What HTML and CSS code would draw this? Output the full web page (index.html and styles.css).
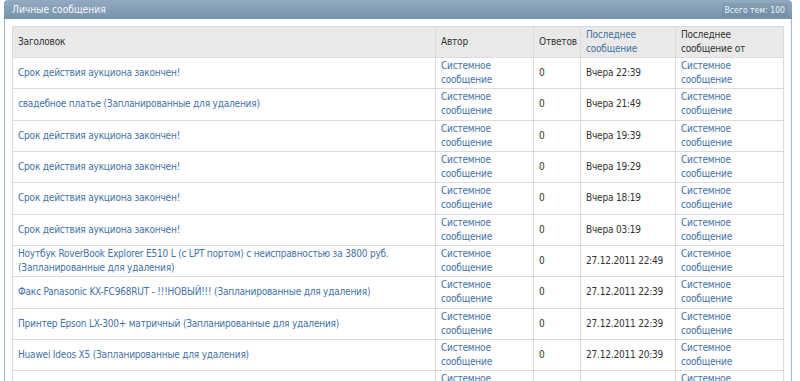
FILE: index.html
```html
<!DOCTYPE html>
<html lang="ru">
<head>
<meta charset="utf-8">
<link rel="stylesheet" href="styles.css">
</head>
<body>
<div class="panel">
  <div class="panel-head">
    <span class="panel-title">Личные сообщения</span>
    <span class="panel-count">Всего тем: 100</span>
  </div>
  <div class="panel-body">
    <table class="grid">
      <colgroup>
        <col class="c-title"><col class="c-author"><col class="c-replies"><col class="c-last"><col class="c-from">
      </colgroup>
      <thead>
        <tr>
          <th>Заголовок</th>
          <th>Автор</th>
          <th>Ответов</th>
          <th><a href="#" class="lnk">Последнее сообщение</a></th>
          <th>Последнее сообщение от</th>
        </tr>
      </thead>
      <tbody>
        <tr><td><a class="lnk" href="#">Срок действия аукциона закончен!</a></td><td><a class="lnk" href="#">Системное сообщение</a></td><td>0</td><td>Вчера 22:39</td><td><a class="lnk" href="#">Системное сообщение</a></td></tr>
        <tr><td><a class="lnk" href="#">свадебное платье (Запланированные для удаления)</a></td><td><a class="lnk" href="#">Системное сообщение</a></td><td>0</td><td>Вчера 21:49</td><td><a class="lnk" href="#">Системное сообщение</a></td></tr>
        <tr><td><a class="lnk" href="#">Срок действия аукциона закончен!</a></td><td><a class="lnk" href="#">Системное сообщение</a></td><td>0</td><td>Вчера 19:39</td><td><a class="lnk" href="#">Системное сообщение</a></td></tr>
        <tr><td><a class="lnk" href="#">Срок действия аукциона закончен!</a></td><td><a class="lnk" href="#">Системное сообщение</a></td><td>0</td><td>Вчера 19:29</td><td><a class="lnk" href="#">Системное сообщение</a></td></tr>
        <tr><td><a class="lnk" href="#">Срок действия аукциона закончен!</a></td><td><a class="lnk" href="#">Системное сообщение</a></td><td>0</td><td>Вчера 18:19</td><td><a class="lnk" href="#">Системное сообщение</a></td></tr>
        <tr><td><a class="lnk" href="#">Срок действия аукциона закончен!</a></td><td><a class="lnk" href="#">Системное сообщение</a></td><td>0</td><td>Вчера 03:19</td><td><a class="lnk" href="#">Системное сообщение</a></td></tr>
        <tr><td><a class="lnk" href="#">Ноутбук RoverBook Explorer E510 L (с LPT портом) с неисправностью за 3800 руб. (Запланированные для удаления)</a></td><td><a class="lnk" href="#">Системное сообщение</a></td><td>0</td><td>27.12.2011 22:49</td><td><a class="lnk" href="#">Системное сообщение</a></td></tr>
        <tr><td><a class="lnk" href="#">Факс Panasonic KX-FC968RUT - !!!НОВЫЙ!!! (Запланированные для удаления)</a></td><td><a class="lnk" href="#">Системное сообщение</a></td><td>0</td><td>27.12.2011 22:39</td><td><a class="lnk" href="#">Системное сообщение</a></td></tr>
        <tr><td><a class="lnk" href="#">Принтер Epson LX-300+ матричный (Запланированные для удаления)</a></td><td><a class="lnk" href="#">Системное сообщение</a></td><td>0</td><td>27.12.2011 22:39</td><td><a class="lnk" href="#">Системное сообщение</a></td></tr>
        <tr><td><a class="lnk" href="#">Huawei Ideos X5 (Запланированные для удаления)</a></td><td><a class="lnk" href="#">Системное сообщение</a></td><td>0</td><td>27.12.2011 20:39</td><td><a class="lnk" href="#">Системное сообщение</a></td></tr>
        <tr><td><a class="lnk" href="#">Срок действия аукциона закончен!</a></td><td><a class="lnk" href="#">Системное сообщение</a></td><td>0</td><td>27.12.2011 19:39</td><td><a class="lnk" href="#">Системное сообщение</a></td></tr>
      </tbody>
    </table>
  </div>
</div>
</body>
</html>
```

FILE: styles.css
```css
html, body {
  margin: 0;
  padding: 0;
  background: #ffffff;
}
body {
  font-family: "DejaVu Sans Condensed", "DejaVu Sans", sans-serif;
  font-size: 10px;
  color: #333333;
}
.panel {
  margin-left: 4px;
  width: 788px;
}
.panel-head {
  height: 19px;
  display: flex;
  align-items: center;
  justify-content: space-between;
  padding: 0 4px 0 8px;
  box-sizing: border-box;
  border-radius: 4px 4px 0 0;
  background: linear-gradient(#93abc0, #7693ab);
  color: #ffffff;
}
.panel-title {
  font-size: 10.2px;
  color: #f4f7fa;
}
.panel-count {
  font-size: 8.6px;
  color: #eef3f7;
  padding: 2px 3px;
  background: rgba(90, 120, 145, 0.2);
}
.panel-body {
  border-left: 1px solid #a7b9c9;
  border-right: 1px solid #a7b9c9;
  padding: 7px 7px 0 7px;
  height: 400px;
}
.grid {
  border-collapse: collapse;
  width: 771px;
  table-layout: fixed;
  letter-spacing: -0.2px;
}
.c-title { width: 423px; }
.c-author { width: 98px; }
.c-replies { width: 47px; }
.c-last { width: 95px; }
.c-from { width: 108px; }
.grid th, .grid td {
  border: 1px solid #dcdcdc;
  text-align: left;
  vertical-align: middle;
  padding: 1px 5px;
  line-height: 14.15px;
  font-weight: normal;
}
.grid th {
  background: #e9e9e9;
  height: 30px;
  color: #333333;
  padding-top: 0;
  padding-bottom: 0;
}
.grid td {
  height: 28.3px;
  color: #333333;
}
.lnk {
  color: #4372a6;
  text-decoration: none;
}
```
